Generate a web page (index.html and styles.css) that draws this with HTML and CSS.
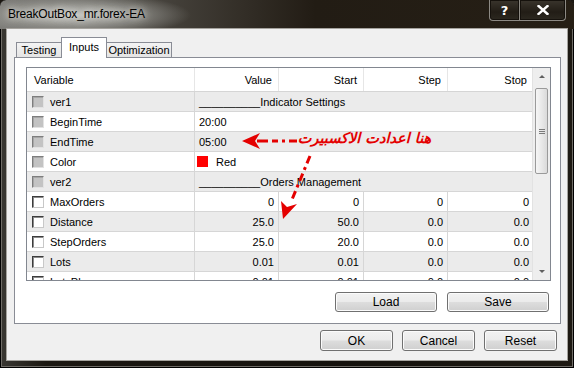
FILE: index.html
```html
<!doctype html>
<html lang="en">
  <head>
    <meta charset="UTF-8">
    <title>BreakOutBox_mr.forex-EA</title>
    <link rel="stylesheet" href="styles.css">
  </head>
  <body>
    <div class="window">
      <!-- Title bar -->
      <div class="titlebar">
        <span class="title">BreakOutBox_mr.forex-EA</span>
        <div class="cap-btns">
          <span class="cap-btn help">?</span>
          <span class="cap-btn close">
            <svg viewBox="0 0 12 10" width="12" height="10">
              <path d="M1.5 1 L10.5 9 M10.5 1 L1.5 9" stroke="#fff" stroke-width="2.4" stroke-linecap="square"/>
            </svg>
          </span>
        </div>
      </div>

      <div class="client">
        <div class="tabs">
          <span class="tab t-testing">Testing</span>
          <span class="tab active">Inputs</span>
          <span class="tab t-opt">Optimization</span>
        </div>

        <div class="panel">
          <div class="grid">
            <div class="grid-main">
              <div class="row head">
                <span class="cell var">Variable</span>
                <span class="cell num">Value</span>
                <span class="cell num">Start</span>
                <span class="cell num">Step</span>
                <span class="cell num last">Stop</span>
              </div>
              <div class="row alt">
                <span class="cell var"><i class="chk off"></i>ver1</span>
                <span class="cell wide">__________Indicator Settings</span>
              </div>
              <div class="row">
                <span class="cell var"><i class="chk off"></i>BeginTime</span>
                <span class="cell wide">20:00</span>
              </div>
              <div class="row alt">
                <span class="cell var"><i class="chk off"></i>EndTime</span>
                <span class="cell wide">05:00</span>
              </div>
              <div class="row">
                <span class="cell var"><i class="chk off"></i>Color</span>
                <span class="cell wide"><i class="swatch"></i>Red</span>
              </div>
              <div class="row alt">
                <span class="cell var"><i class="chk off"></i>ver2</span>
                <span class="cell wide">__________Orders Management</span>
              </div>
              <div class="row">
                <span class="cell var"><i class="chk"></i>MaxOrders</span>
                <span class="cell num">0</span>
                <span class="cell num">0</span>
                <span class="cell num">0</span>
                <span class="cell num last">0</span>
              </div>
              <div class="row alt">
                <span class="cell var"><i class="chk"></i>Distance</span>
                <span class="cell num">25.0</span>
                <span class="cell num">50.0</span>
                <span class="cell num">0.0</span>
                <span class="cell num last">0.0</span>
              </div>
              <div class="row">
                <span class="cell var"><i class="chk"></i>StepOrders</span>
                <span class="cell num">25.0</span>
                <span class="cell num">20.0</span>
                <span class="cell num">0.0</span>
                <span class="cell num last">0.0</span>
              </div>
              <div class="row alt">
                <span class="cell var"><i class="chk"></i>Lots</span>
                <span class="cell num">0.01</span>
                <span class="cell num">0.01</span>
                <span class="cell num">0.0</span>
                <span class="cell num last">0.0</span>
              </div>
              <div class="row">
                <span class="cell var"><i class="chk"></i>LotsPlus</span>
                <span class="cell num">0.01</span>
                <span class="cell num">0.01</span>
                <span class="cell num">0.0</span>
                <span class="cell num last">0.0</span>
              </div>
            </div>
            <!-- Vertical scrollbar -->
            <div class="scrollbar">
              <span class="sb-arrow up"></span>
              <span class="sb-thumb"><i></i><i></i><i></i></span>
              <span class="sb-track"></span>
              <span class="sb-arrow down"></span>
            </div>
          </div>
          <div class="panel-btns">
            <button class="btn wide-btn">Load</button>
            <button class="btn wide-btn">Save</button>
          </div>
        </div>

        <div class="dialog-btns">
          <button class="btn">OK</button>
          <button class="btn">Cancel</button>
          <button class="btn">Reset</button>
        </div>
      </div>

      <!-- Red annotation drawn over the dialog -->
      <div class="annot">
        <svg width="574" height="368" viewBox="0 0 574 368">
          <g stroke="#e40000" stroke-width="3" fill="none">
            <path d="M257 141 H297" stroke-dasharray="11 4 6 4 3 4"/>
            <path d="M310 156 L291 202" stroke-dasharray="8 4 3 4"/>
          </g>
          <g fill="#e40000">
            <path d="M242 141 L260 133 L255 141 L260 149 Z"/>
            <path d="M283 219 L281 201 L287 207 L297 204 Z"/>
          </g>
        </svg>
        <span class="annot-text">هنا اعدادت الاكسبيرت</span>
      </div>
    </div>
  </body>
</html>
```

FILE: styles.css
```css
body {
  margin: 0;
  padding: 0;
  background: #1a1610;
  font-family: 'Liberation Sans', Arial, sans-serif;
  font-size: 11px;
  color: #000;
}
/* Window frame */
.window {
  position: relative;
  width: 574px;
  height: 368px;
  display: flex;
  flex-direction: column;
  background: linear-gradient(90deg, #3a3833 0%, #1c1812 8%, #15120d 60%, #1e1a13 100%);
  border-radius: 6px 6px 0 0;
  overflow: hidden;
  box-shadow: inset 0 0 0 1px #000, inset 0 0 0 2px #6f6c66;
}
.titlebar {
  height: 29px;
  display: flex;
  align-items: flex-start;
  justify-content: space-between;
  padding-left: 8px;
  background:
    radial-gradient(ellipse 115px 22px at 76px 15px, rgba(200,200,196,0.95) 0%, rgba(160,160,155,0.65) 55%, rgba(90,88,84,0) 100%),
    linear-gradient(90deg, #777672 0%, #4a4741 25%, #221c14 55%, #261f15 100%);
  border-radius: 6px 6px 0 0;
}
.title {
  margin-top: 7px;
  font-family: 'Liberation Sans', Arial, sans-serif;
  font-size: 12px;
  letter-spacing: -0.2px;
  color: #000;
  text-shadow: 0 0 6px #e0e0dc, 0 0 10px #d0d0cc;
}
.cap-btns {
  display: flex;
  margin-right: 8px;
}
.cap-btn {
  height: 20px;
  display: flex;
  align-items: center;
  justify-content: center;
  background: linear-gradient(#3a352d, #221d16 60%, #2c2820);
  border: 1px solid #8d8a84;
  border-top: none;
  box-shadow: inset 0 0 0 1px #15110c;
  color: #fff;
  font-weight: bold;
  font-size: 13px;
  font-family: 'DejaVu Sans', sans-serif;
}
.cap-btn.help {
  width: 29px;
  border-radius: 0 0 0 4px;
  border-right: none;
}
.cap-btn.close {
  width: 45px;
  border-radius: 0 0 4px 0;
}
/* Client area */
.client {
  flex: 1;
  margin: 0 7px 8px 7px;
  background: #f0f0f0;
  box-shadow: 0 0 0 1px #a5a39e;
  display: flex;
  flex-direction: column;
}
.tabs {
  display: flex;
  align-items: flex-end;
  height: 21px;
  margin: 8px 0 -1px 9px;
}
.tab {
  box-sizing: border-box;
  height: 15px;
  margin-bottom: 1px;
  border: 1px solid #898c95;
  border-bottom: none;
  background: linear-gradient(#f3f3f3, #e4e4e4);
  text-align: center;
  line-height: 15px;
  font-size: 11px;
  white-space: nowrap;
}
.t-testing { width: 46px; }
.t-opt { width: 66px; margin-left: -1px; }
.tab.active {
  position: relative;
  z-index: 1;
  width: 46px;
  height: 21px;
  margin-bottom: 0;
  margin-left: -1px;
  background: #fff;
  line-height: 18px;
}
.panel {
  box-sizing: border-box;
  width: 547px;
  height: 267px;
  margin-left: 7px;
  padding: 9px 10px 0 11px;
  background: #fff;
  border: 1px solid #898c95;
}
/* Inputs grid */
.grid {
  box-sizing: border-box;
  width: 525px;
  height: 214px;
  border: 1px solid #828790;
  display: flex;
  overflow: hidden;
}
.grid-main {
  width: 506px;
  overflow: hidden;
}
.row {
  box-sizing: border-box;
  height: 20px;
  display: grid;
  grid-template-columns: 168px 84px 85px 84px 85px;
  border-bottom: 1px solid #d6d6d6;
  background: #fff;
}
.row.alt { background: #ebebeb; }
.row.head {
  height: 24px;
  border-bottom: 1px solid #d5d5d5;
}
.cell {
  display: flex;
  align-items: center;
  border-right: 1px solid #d6d6d6;
  white-space: nowrap;
  overflow: hidden;
}
.cell.last { border-right: none; }
.cell.num {
  justify-content: flex-end;
  padding-right: 4px;
}
.head .cell { border-right-color: #e6e6e6; }
.head .cell.num { padding-right: 6px; }
.head .cell.var { padding-left: 7px; }
.cell.var { padding-left: 5px; }
.cell.wide {
  grid-column: 2 / 6;
  border-right: none;
  padding-left: 4px;
}
.chk {
  box-sizing: border-box;
  width: 12px;
  height: 12px;
  margin-right: 6px;
  background: #fff;
  border: 1px solid;
  border-color: #3c3c3c #c8c8c8 #c8c8c8 #3c3c3c;
  box-shadow: inset 1px 1px 0 #8a8a8a;
}
.chk.off {
  background: #c3c3c3;
  border-color: #7d7d7d #e2e2e2 #e2e2e2 #7d7d7d;
  box-shadow: inset 1px 1px 0 #a6a6a6;
}
.swatch {
  width: 11px;
  height: 11px;
  margin: 0 8px 0 -2px;
  background: #f00;
}
/* Scrollbar */
.scrollbar {
  width: 17px;
  display: flex;
  flex-direction: column;
  align-items: center;
  background: #eeeeee;
  border-left: 1px solid #e2e2e2;
}
.sb-arrow {
  height: 17px;
  width: 17px;
  display: flex;
  align-items: center;
  justify-content: center;
}
.sb-arrow::after {
  content: '';
  border-left: 3px solid transparent;
  border-right: 3px solid transparent;
}
.sb-arrow.up::after { border-bottom: 3px solid #606060; }
.sb-arrow.down::after { border-top: 3px solid #606060; }
.sb-thumb {
  box-sizing: border-box;
  width: 13px;
  height: 86px;
  margin-top: 3px;
  border: 1px solid #9a9a9a;
  border-radius: 2px;
  background: linear-gradient(90deg, #f6f6f6, #e9e9e9 50%, #dadada);
  display: flex;
  flex-direction: column;
  align-items: center;
  justify-content: center;
  gap: 1px;
}
.sb-thumb i {
  width: 6px;
  height: 1px;
  background: #7a7a7a;
}
.sb-track { flex: 1; }
/* Buttons */
.panel-btns {
  display: flex;
  justify-content: flex-end;
  gap: 10px;
  margin-top: 11px;
  padding-right: 1px;
}
.dialog-btns {
  display: flex;
  justify-content: flex-end;
  gap: 9px;
  margin: 6px 10px 0 0;
}
.btn {
  box-sizing: border-box;
  width: 73px;
  height: 21px;
  padding: 0;
  border: 1px solid #707070;
  border-radius: 3px;
  background: linear-gradient(#f2f2f2 0%, #ebebeb 48%, #dddddd 52%, #cfcfcf 100%);
  box-shadow: inset 0 0 0 1px #fbfbfb;
  font-family: 'Liberation Sans', Arial, sans-serif;
  font-size: 12px;
  color: #000;
}
.btn.wide-btn {
  width: 102px;
  height: 20px;
}
/* Annotation overlay */
.annot {
  position: absolute;
  left: 0;
  top: 0;
  width: 574px;
  height: 368px;
  pointer-events: none;
}
.annot svg {
  display: block;
}
.annot-text {
  position: absolute;
  left: 297px;
  top: 130px;
  width: 135px;
  direction: rtl;
  text-align: center;
  white-space: nowrap;
  font-family: 'DejaVu Sans', sans-serif;
  font-weight: bold;
  font-style: italic;
  font-size: 14.5px;
  color: #e40000;
}
```
